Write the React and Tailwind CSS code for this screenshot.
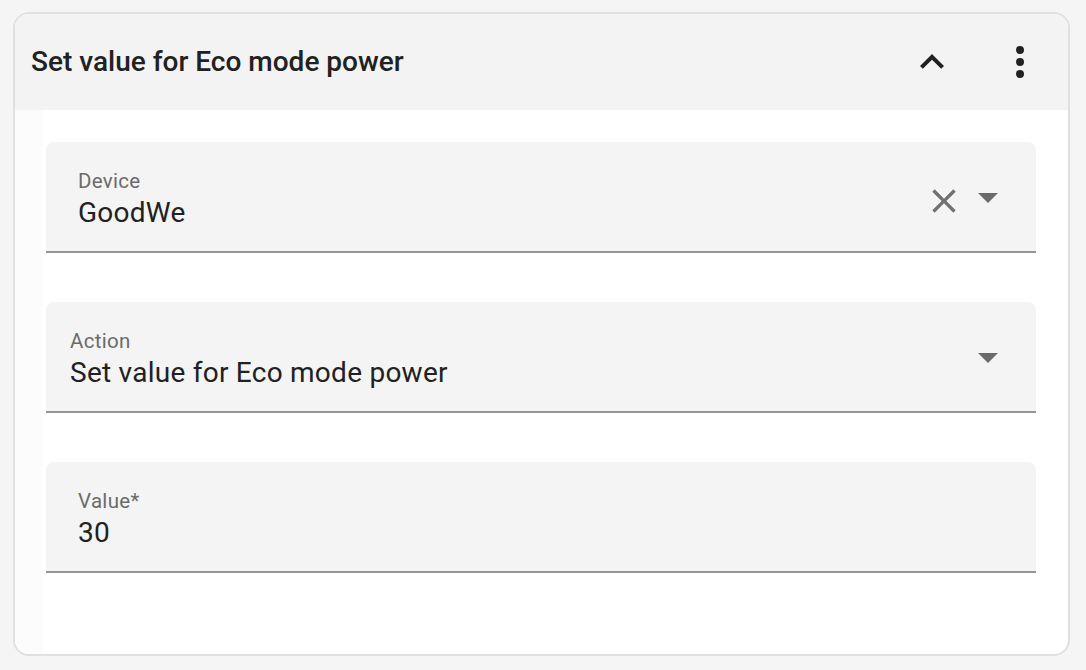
import React from "react";

function ChevronUp() {
  return (
    <svg viewBox="0 0 24 24" className="w-[48px] h-[48px] shrink-0" fill="#212121">
      <path d="M7.41 15.41L12 10.83l4.59 4.58L18 14l-6-6-6 6z" />
    </svg>
  );
}

function DotsVertical() {
  return (
    <svg viewBox="0 0 24 24" className="w-[48px] h-[48px] shrink-0" fill="#212121">
      <path d="M12,16A2,2 0 0,1 14,18A2,2 0 0,1 12,20A2,2 0 0,1 10,18A2,2 0 0,1 12,16M12,10A2,2 0 0,1 14,12A2,2 0 0,1 12,14A2,2 0 0,1 10,12A2,2 0 0,1 12,10M12,4A2,2 0 0,1 14,6A2,2 0 0,1 12,8A2,2 0 0,1 10,6A2,2 0 0,1 12,4Z" />
    </svg>
  );
}

function CloseIcon() {
  return (
    <svg viewBox="0 0 24 24" className="w-[40px] h-[40px] shrink-0 mt-[9px]" fill="#707070">
      <path d="M19,6.41L17.59,5L12,10.59L6.41,5L5,6.41L10.59,12L5,17.59L6.41,19L12,13.41L17.59,19L19,17.59L13.41,12L19,6.41Z" />
    </svg>
  );
}

function DropArrow() {
  return (
    <svg viewBox="0 0 24 24" className="w-[48px] h-[48px] shrink-0 mt-[1px]" fill="#6b6b6b">
      <path d="M7 10l5 5 5-5z" />
    </svg>
  );
}

function Field({ label, value, inset, clearable, select }) {
  return (
    <div className="flex h-[111px] bg-[#f4f4f4] rounded-t-[8px] border-b-2 border-[#959595]">
      <div className={`flex-1 pt-[27px] ${inset}`}>
        <div className="text-[20.5px] leading-[24px] text-[#6b6b6b] tracking-[0.3px]">{label}</div>
        <div className="mt-[4px] text-[28px] leading-[32px] text-[#212121] tracking-[0.25px]">{value}</div>
      </div>
      {select && (
        <div className="flex items-center pr-[24px]">
          {clearable && <CloseIcon />}
          <DropArrow />
        </div>
      )}
    </div>
  );
}

export default function App() {
  return (
    <div className="min-h-screen bg-[#f5f5f5] pl-[13px] pt-[12px] font-['Roboto',sans-serif]">
      <div className="w-[1057px] h-[644px] rounded-[16px] border-2 border-[#e0e0e0] bg-white overflow-hidden flex flex-col">
        <div className="h-[96px] bg-[#f3f3f3] flex items-center pl-[16px] pr-[24px] shrink-0">
          <div className="flex-1 text-[28px] leading-[34px] font-medium text-[#212121]">Set value for Eco mode power</div>
          <ChevronUp />
          <div className="w-[40px]" />
          <DotsVertical />
        </div>
        <div className="flex flex-1">
          <div className="w-[28px] bg-[#fcfcfc] shrink-0" />
          <div className="flex-1 pl-[3px] pr-[32px] pt-[32px] flex flex-col gap-[49px]">
            <Field label="Device" value="GoodWe" inset="pl-[32px]" clearable select />
            <Field label="Action" value="Set value for Eco mode power" inset="pl-[24px]" select />
            <Field label="Value*" value="30" inset="pl-[32px]" />
          </div>
        </div>
      </div>
    </div>
  );
}
